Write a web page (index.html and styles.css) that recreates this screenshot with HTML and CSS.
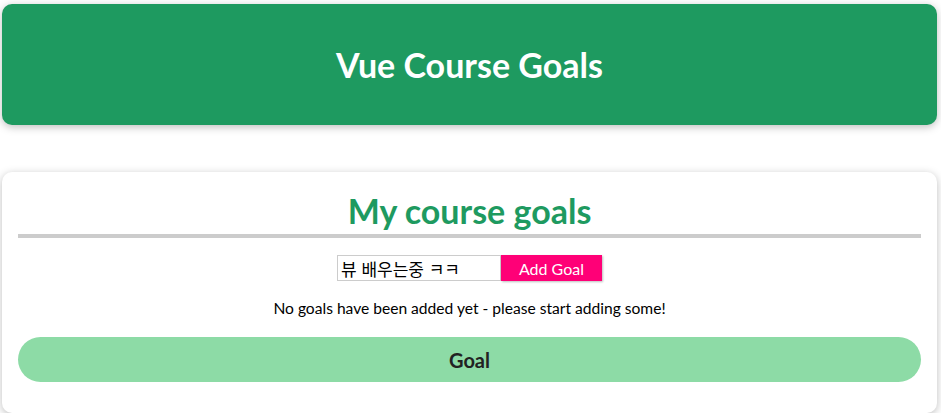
FILE: index.html
```html
<!DOCTYPE html>
<html lang="ko">
<head>
<meta charset="utf-8">
<title>Vue Course Goals</title>
<link rel="stylesheet" href="styles.css">
</head>
<body>
<header class="top">
  <h1 class="top-title">Vue Course Goals</h1>
</header>
<section class="card">
  <h2 class="card-title">My course goals</h2>
  <div class="form-row">
    <input class="goal-input" type="text" value="뷰 배우는중 ㅋㅋ">
    <button class="add-btn">Add Goal</button>
  </div>
  <p class="empty">No goals have been added yet - please start adding some!</p>
  <div class="goal-pill">Goal</div>
</section>
</body>
</html>
```
FILE: styles.css
```css
html {
  font-family: "Lato", "Noto Sans", sans-serif;
}
body {
  margin: 0;
  padding-top: 4px;
}
.top {
  margin: 0 4px 0 2px;
  height: 121px;
  border-radius: 10px;
  background-color: #1e9a60;
  box-shadow: 0 2px 8px rgba(0, 0, 0, 0.26);
  display: flex;
  align-items: center;
  justify-content: center;
}
.top-title {
  margin: 0;
  color: #fff;
  font-size: 34px;
  font-weight: 700;
}
.card {
  margin: 47px 4px 0 2px;
  padding: 16px;
  border-radius: 10px;
  box-shadow: 0 2px 8px rgba(0, 0, 0, 0.26);
  text-align: center;
  height: 209px;
}
.card-title {
  margin: 0 0 17px;
  font-size: 34px;
  line-height: 46px;
  font-weight: 700;
  color: #1e9a60;
  border-bottom: 4px solid #ccc;
}
.form-row {
  display: flex;
  justify-content: center;
  height: 26px;
}
.goal-input {
  box-sizing: border-box;
  width: 164px;
  height: 26px;
  margin: 0;
  padding: 1px 3px;
  border: 1px solid #ccc;
  font-family: "Noto Sans CJK KR", sans-serif;
  font-size: 17px;
  color: #000;
}
.add-btn {
  box-sizing: border-box;
  width: 101px;
  height: 26px;
  margin: 0;
  border: 1px solid #ff0077;
  background-color: #ff0077;
  color: #fff;
  font-family: inherit;
  font-size: 16px;
  padding: 0 16px;
  box-shadow: 1px 1px 2px rgba(0, 0, 0, 0.26);
}
.empty {
  margin: 16px 0 17px;
  font-size: 15.6px;
  line-height: 23px;
  color: #000;
}
.goal-pill {
  height: 45px;
  line-height: 46px;
  border-radius: 23px;
  background-color: #8ddba6;
  font-size: 20px;
  font-weight: 700;
  color: #222;
}
```
